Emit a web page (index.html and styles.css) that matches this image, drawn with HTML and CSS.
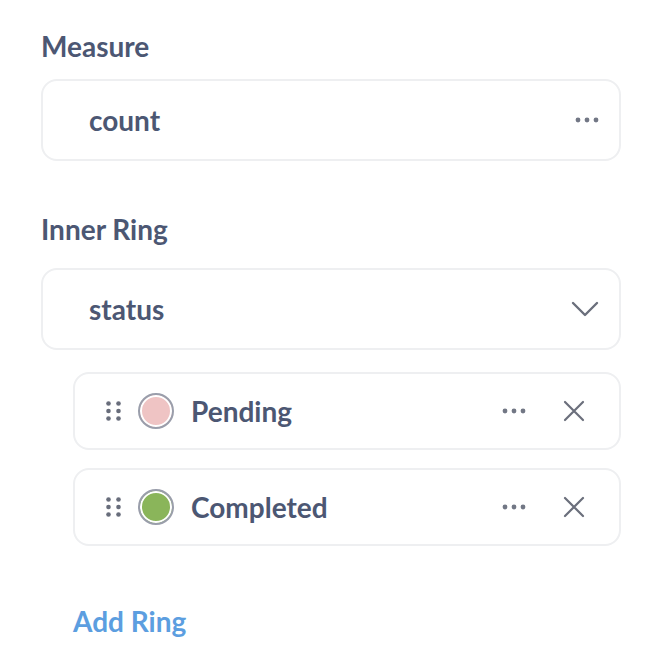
FILE: index.html
```html
<!DOCTYPE html>
<html>
<head>
<meta charset="utf-8">
<link rel="stylesheet" href="styles.css">
</head>
<body>
<div class="panel">
  <section class="section">
    <h3 class="label">Measure</h3>
    <div class="field">
      <span class="field-value">count</span>
      <span class="icon-btn">
        <svg width="24" height="6" viewBox="0 0 24 6"><circle cx="3" cy="3" r="2.4" fill="#727785"/><circle cx="12" cy="3" r="2.4" fill="#727785"/><circle cx="21" cy="3" r="2.4" fill="#727785"/></svg>
      </span>
    </div>
  </section>
  <section class="section inner">
    <h3 class="label">Inner Ring</h3>
    <div class="field">
      <span class="field-value">status</span>
      <span class="icon-btn">
        <svg width="28" height="16" viewBox="0 0 28 16"><path d="M2 2 L14 14 L26 2" fill="none" stroke="#6b6f7c" stroke-width="2.4" stroke-linecap="round" stroke-linejoin="round"/></svg>
      </span>
    </div>
    <div class="items">
      <div class="item">
        <span class="grip">
          <svg width="15" height="20" viewBox="0 0 15 20"><g fill="#686d7b"><circle cx="2.5" cy="2.5" r="2.3"/><circle cx="12.5" cy="2.5" r="2.3"/><circle cx="2.5" cy="10" r="2.3"/><circle cx="12.5" cy="10" r="2.3"/><circle cx="2.5" cy="17.5" r="2.3"/><circle cx="12.5" cy="17.5" r="2.3"/></g></svg>
        </span>
        <span class="swatch pink"></span>
        <span class="item-name">Pending</span>
        <span class="item-more">
          <svg width="24" height="6" viewBox="0 0 24 6"><circle cx="3" cy="3" r="2.4" fill="#727785"/><circle cx="12" cy="3" r="2.4" fill="#727785"/><circle cx="21" cy="3" r="2.4" fill="#727785"/></svg>
        </span>
        <span class="item-close">
          <svg width="22" height="22" viewBox="0 0 22 22"><path d="M2 2 L20 20 M20 2 L2 20" stroke="#6b6f7c" stroke-width="2.2" stroke-linecap="round"/></svg>
        </span>
      </div>
      <div class="item">
        <span class="grip">
          <svg width="15" height="20" viewBox="0 0 15 20"><g fill="#686d7b"><circle cx="2.5" cy="2.5" r="2.3"/><circle cx="12.5" cy="2.5" r="2.3"/><circle cx="2.5" cy="10" r="2.3"/><circle cx="12.5" cy="10" r="2.3"/><circle cx="2.5" cy="17.5" r="2.3"/><circle cx="12.5" cy="17.5" r="2.3"/></g></svg>
        </span>
        <span class="swatch green"></span>
        <span class="item-name">Completed</span>
        <span class="item-more">
          <svg width="24" height="6" viewBox="0 0 24 6"><circle cx="3" cy="3" r="2.4" fill="#727785"/><circle cx="12" cy="3" r="2.4" fill="#727785"/><circle cx="21" cy="3" r="2.4" fill="#727785"/></svg>
        </span>
        <span class="item-close">
          <svg width="22" height="22" viewBox="0 0 22 22"><path d="M2 2 L20 20 M20 2 L2 20" stroke="#6b6f7c" stroke-width="2.2" stroke-linecap="round"/></svg>
        </span>
      </div>
    </div>
  </section>
  <button class="add-ring">Add Ring</button>
</div>
</body>
</html>
```

FILE: styles.css
```css
* { box-sizing: border-box; }
html, body { margin: 0; padding: 0; background: #ffffff; }
body {
  font-family: Lato, "Open Sans", sans-serif;
  color: #4c5773;
}
.panel {
  width: 580px;
  margin-left: 41px;
  padding-top: 28px;
}
.label {
  margin: 0 0 15px 0;
  font-size: 28px;
  font-weight: 700;
  line-height: 36px;
}
.section.inner { margin-top: 50px; }
.field {
  height: 82px;
  border: 2px solid #eeeff1;
  border-radius: 16px;
  display: flex;
  align-items: center;
  padding: 0 20px 0 46px;
}
.section.inner .label { margin-bottom: 21px; }
.field-value {
  flex: 1;
  font-size: 28px;
  font-weight: 700;
}
.icon-btn { display: flex; align-items: center; }
.items {
  margin-top: 22px;
  margin-left: 32px;
  display: flex;
  flex-direction: column;
  gap: 18px;
}
.item {
  height: 78px;
  border: 2px solid #eeeff1;
  border-radius: 16px;
  display: flex;
  align-items: center;
  padding: 0 34px 0 31px;
}
.grip { display: flex; width: 15px; margin-right: 17px; }
.swatch {
  width: 36px;
  height: 36px;
  border-radius: 50%;
  border: 2px solid #9a9eab;
  box-shadow: inset 0 0 0 2px #ffffff;
  margin-right: 17px;
}
.swatch.pink { background: #efc4c4; }
.swatch.green { background: #8ab55a; }
.item-name {
  flex: 1;
  font-size: 28px;
  font-weight: 700;
}
.item-more { display: flex; margin-right: 37px; }
.item-close { display: flex; }
.add-ring {
  display: block;
  margin: 57px 0 0 32px;
  padding: 0;
  border: none;
  background: none;
  font-family: Lato, "Open Sans", sans-serif;
  font-size: 28px;
  font-weight: 700;
  line-height: 36px;
  color: #5c9ee0;
  cursor: pointer;
}
```
